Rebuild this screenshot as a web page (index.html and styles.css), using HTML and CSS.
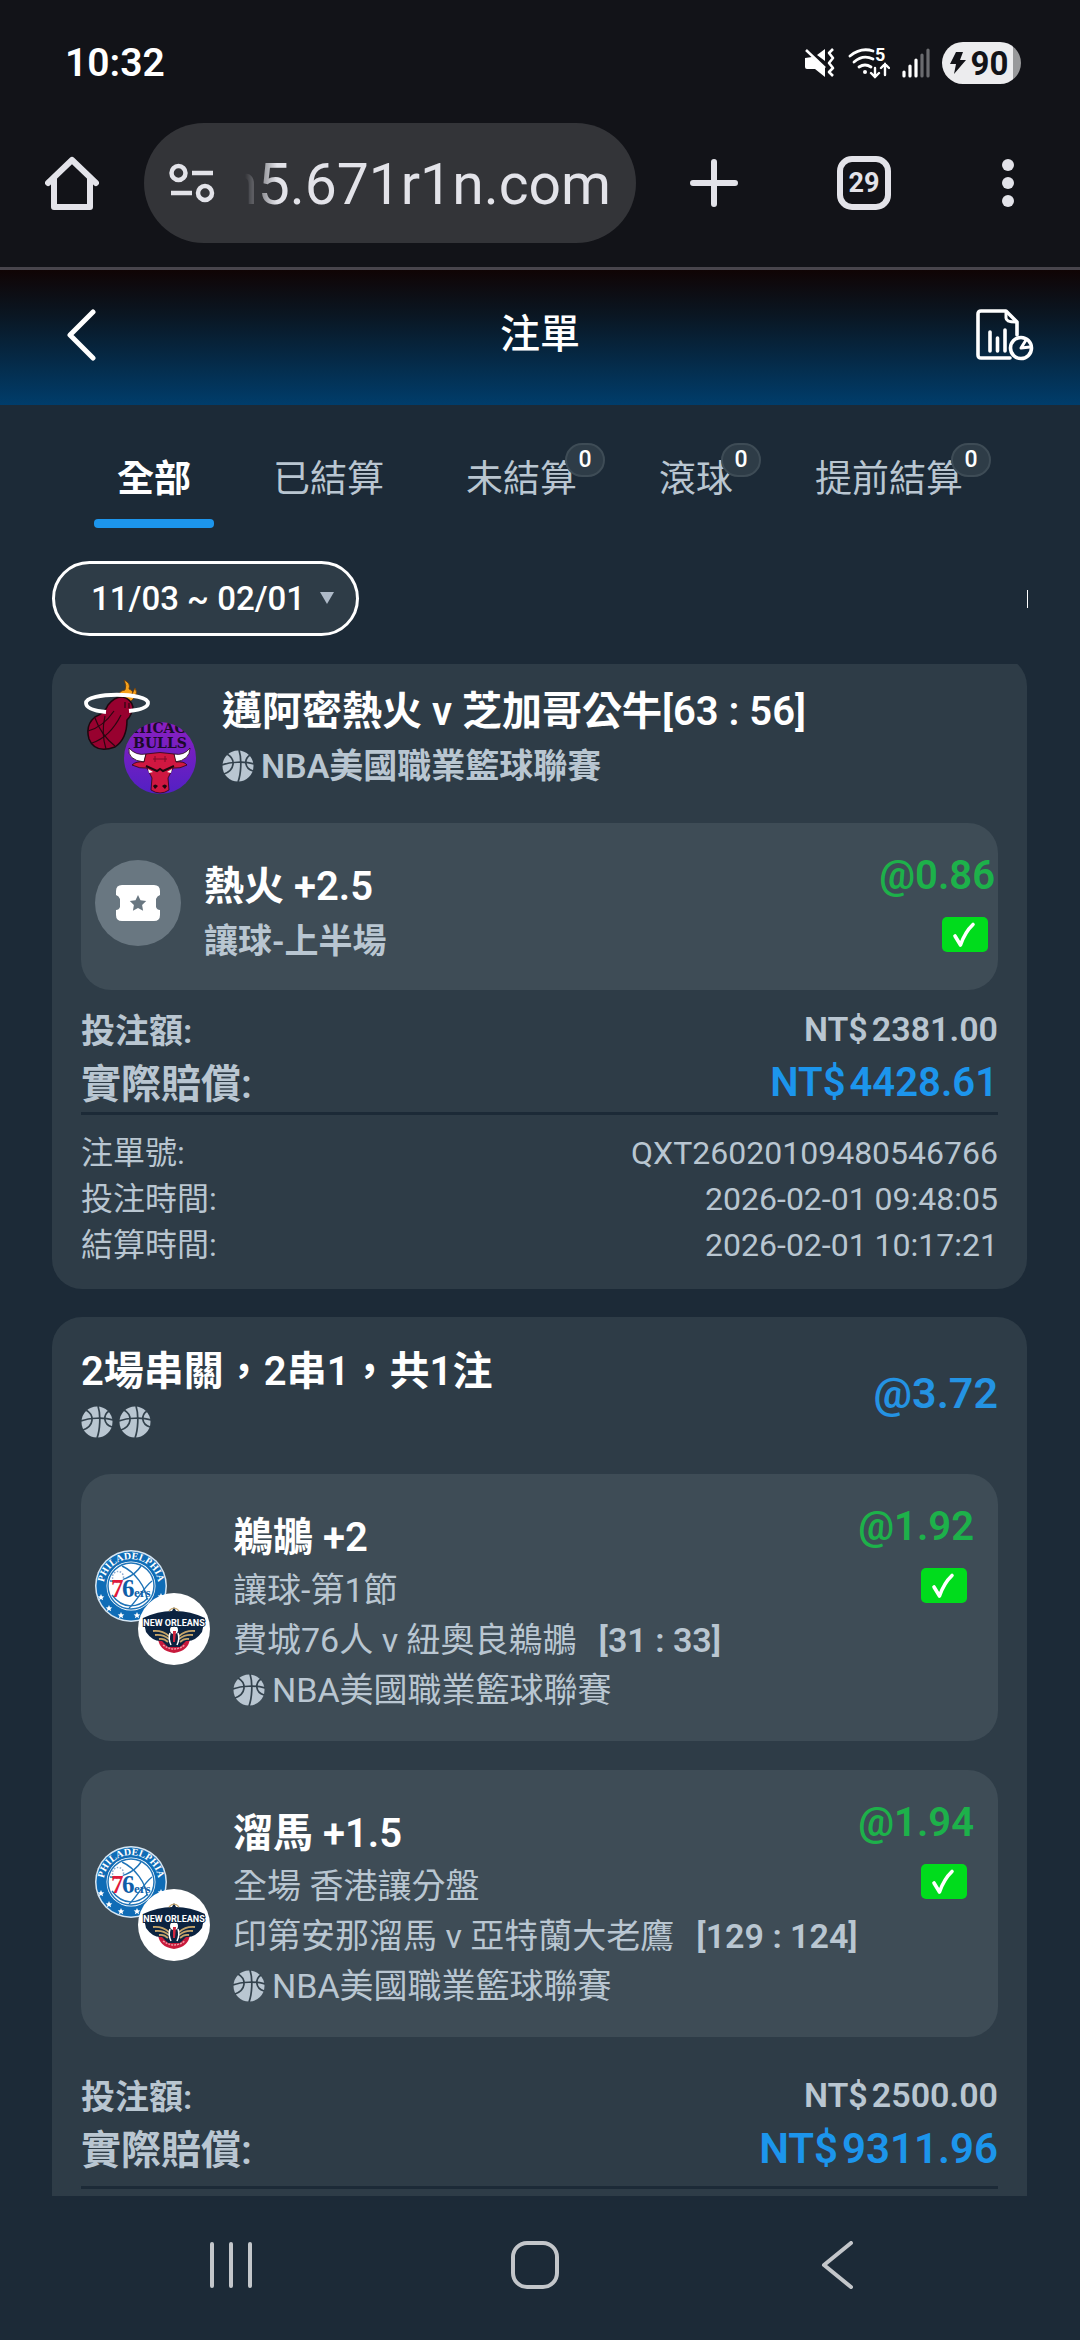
FILE: index.html
```html
<!DOCTYPE html>
<html lang="zh-Hant">
<head>
  <meta charset="UTF-8" />
  <meta name="viewport" content="width=device-width, initial-scale=1.0"/>
  <title>注單</title>
  <link rel="stylesheet" href="styles.css">
</head>
<body>

  <!-- shared icons -->
  <svg class="sprite" aria-hidden="true">
    <symbol id="ball" viewBox="0 0 32 32">
      <circle cx="16" cy="16" r="15.5" fill="#b9c6d1"/>
      <g fill="none" stroke="#33424d" stroke-width="1.7">
        <path d="M0 15C8 12 23 11 32 14"/>
        <path d="M17 0C20 9 19 24 16 32"/>
        <path d="M5 4C14 9 13 20 2 24"/>
        <path d="M28 5C22 9 22 18 31 21"/>
      </g>
    </symbol>
    <symbol id="check" viewBox="0 0 46 35">
      <rect width="46" height="35" rx="5" fill="#00dc1c"/>
      <path d="M13 19L18.500 28Q23 15 31 7.500" fill="none" stroke="#fff" stroke-width="3.600" stroke-linecap="round" stroke-linejoin="round"/>
    </symbol>
    <symbol id="sixers" viewBox="0 0 72 72">
      <path id="ring" d="M9.500 44A27.500 27.500 0 1 1 62.500 44" fill="none"/>
      <circle cx="36" cy="36" r="36" fill="#d6e6f3"/>
      <circle cx="36" cy="36" r="34.500" fill="#0f6cb6"/>
      <circle cx="36" cy="36" r="24.500" fill="#fff"/>
      <circle cx="36" cy="36" r="23" fill="none" stroke="#1f74b8" stroke-width="1.500"/>
      <g fill="none" stroke="#1f74b8" stroke-width="1.400">
        <path d="M27 16C40 22 51 37 52 50"/>
        <path d="M46 16C38 28 24 32 15 31"/>
        <path d="M17 45C28 60 43 58 53 48"/>
        <path d="M34 58C42 51 48 38 57 31"/>
      </g>
      <circle cx="23" cy="27" r="5.500" fill="#fff" stroke="#8dabd0" stroke-width="1.500" stroke-dasharray="1.500 1.500"/>
      <text class="logo-ring"><textPath href="#ring" startOffset="50%" text-anchor="middle">PHILADELPHIA</textPath></text>
      <text class="logo-seven" x="16" y="47">7</text>
      <text class="logo-six" x="27" y="47">6</text>
      <text class="logo-ers" x="39" y="47">ers</text>
      <g fill="#fff">
        <path id="star" d="M6 44l1 2.200 2.300.2-1.800 1.500.6 2.300L6 49l-2.100 1.200.6-2.300-1.800-1.500 2.300-.2z"/>
        <use href="#star" x="8" y="11"/>
        <use href="#star" x="20" y="18"/>
        <use href="#star" x="36" y="18"/>
        <use href="#star" x="60" y="-1"/>
      </g>
    </symbol>
    <symbol id="pelicans" viewBox="0 0 72 72">
      <circle cx="36" cy="36" r="36" fill="#fff"/>
      <path d="M20 45Q21 58 36 60Q51 58 52 45z" fill="#c8193b"/>
      <path d="M5 25Q20 18 34 18L36 14L38 18Q52 18 67 25L64 39Q57 49 48 48L42 54H30L24 48Q15 49 8 39z" fill="#0c2340"/>
      <g fill="none" stroke="#c5a469" stroke-width="1.800">
        <path d="M15 38Q24 37 31 43"/>
        <path d="M17 42Q25 41 31 46"/>
        <path d="M21 46Q26 45 30 49"/>
        <path d="M57 38Q48 37 41 43"/>
        <path d="M55 42Q47 41 41 46"/>
        <path d="M51 46Q46 45 42 49"/>
        <path d="M31 18Q36 12 41 18" stroke-width="1.200"/>
      </g>
      <circle cx="36" cy="37" r="4" fill="#fff"/>
      <path d="M35 38h3l-1 11h-2z" fill="#d0273f"/>
      <path d="M32 40Q30 46 33 52M40 40Q42 46 39 52" fill="none" stroke="#fff" stroke-width="1.500"/>
      <path d="M25 52Q36 60 47 52" fill="none" stroke="#ef9aa5" stroke-width="1.500" stroke-dasharray="2 1"/>
      <text class="logo-nola" x="36" y="33" text-anchor="middle">NEW ORLEANS</text>
    </symbol>
  </svg>

  <!-- phone status bar -->
  <div class="status-bar">
    <span class="clock">10:32</span>
    <div class="status-icons">
      <svg width="32" height="30" viewBox="0 0 32 30">
        <path d="M1 10L8 9L21 20V29L11 21H3Q1 21 1 19zM13 7L21 1V13z" fill="#fff"/>
        <path d="M2 2L21 20" stroke="#fff" stroke-width="2.500"/>
        <path d="M29 1l-4 4 4 5-4 5 4 5-4 4 4 4" fill="none" stroke="#fff" stroke-width="2.600" stroke-linejoin="round"/>
      </svg>
      <svg width="42" height="32" viewBox="0 0 42 32">
        <g fill="none" stroke="#fff" stroke-width="2.800" stroke-linecap="round">
          <path d="M2 9Q13 0 25 4"/>
          <path d="M6 15Q15 7 25 12"/>
          <path d="M11 20Q17 16 23 20"/>
          <path d="M27 21V30M23 26l4 4 4-4M37 28V17M33 21l4-4 4 4" stroke-width="2.400"/>
        </g>
        <circle cx="17" cy="25" r="2" fill="#fff"/>
        <text class="wifi-band" x="27" y="14">5</text>
      </svg>
      <svg width="28" height="30" viewBox="0 0 28 30">
        <path d="M2 24V28M8 18V28M14 12V28" stroke="#fff" stroke-width="3.200" stroke-linecap="round"/>
        <path d="M20 7V28M26 2V28" stroke="#6a6b6f" stroke-width="3.200" stroke-linecap="round"/>
      </svg>
      <div class="battery">
        <svg width="16" height="24" viewBox="0 0 16 24"><path d="M6 1H13L10 9H16L4 23L6 13H0z" fill="#121318"/></svg>
        <span>90</span>
      </div>
    </div>
  </div>

  <!-- browser toolbar -->
  <div class="toolbar">
    <button class="icon-btn" aria-label="Home">
      <svg width="54" height="54" viewBox="0 0 54 54" fill="none" stroke="#e3e3e9" stroke-width="6" stroke-linecap="round" stroke-linejoin="round">
        <path d="M3 27L27 4L51 27M9 23V51H45V23"/>
      </svg>
    </button>
    <div class="address">
      <svg width="46" height="40" viewBox="0 0 46 40" fill="none" stroke="#e3e3e9" stroke-width="4.500">
        <circle cx="9.500" cy="10" r="7"/>
        <path d="M23 10H44M2 30H23"/>
        <circle cx="36" cy="30" r="7"/>
      </svg>
      <input type="text" class="url" aria-label="網址" value="n5.671r1n.com">
    </div>
    <button class="icon-btn" aria-label="New tab">
      <svg width="48" height="48" viewBox="0 0 48 48" stroke="#e3e3e9" stroke-width="6" stroke-linecap="round"><path d="M24 3V45M3 24H45"/></svg>
    </button>
    <button class="tab-count">29</button>
    <button class="icon-btn" aria-label="Menu">
      <svg width="12" height="48" viewBox="0 0 12 48" fill="#e3e3e9"><circle cx="6" cy="6" r="6"/><circle cx="6" cy="24" r="6"/><circle cx="6" cy="42" r="6"/></svg>
    </button>
  </div>

  <header class="page-header">
    <button class="icon-btn" aria-label="返回">
      <svg width="30" height="52" viewBox="0 0 30 52" fill="none" stroke="#fff" stroke-width="5" stroke-linecap="round" stroke-linejoin="round"><path d="M27 3L4 26L27 49"/></svg>
    </button>
    <h1>注單</h1>
    <button class="icon-btn report" aria-label="報表">
      <svg width="58" height="52" viewBox="0 0 58 52" fill="none" stroke="#fff" stroke-width="3.600" stroke-linecap="round" stroke-linejoin="round">
        <path d="M34 49H5Q2 49 2 46V5Q2 2 5 2H30L41 13V26"/>
        <path d="M30 3V9Q30 13 40 13" stroke-width="3"/>
        <path d="M14 23V42M21.500 29V42M29 21V42"/>
        <circle cx="45" cy="39" r="10.500"/>
        <path d="M45 39L50 31M45 39L54 38" stroke-width="3"/>
      </svg>
    </button>
  </header>

  <nav class="tabs">
    <button class="tab active">全部</button>
    <button class="tab">已結算</button>
    <button class="tab">未結算<span class="badge">0</span></button>
    <button class="tab">滾球<span class="badge">0</span></button>
    <button class="tab">提前結算<span class="badge">0</span></button>
  </nav>

  <div class="filters">
    <div class="date-range">
      <select aria-label="日期">
        <option>11/03 ~ 02/01</option>
      </select>
      <svg class="arrow" width="14" height="12" viewBox="0 0 14 12"><path d="M0 0H14L7 12z" fill="#aebac8"/></svg>
    </div>
    <span class="more"></span>
  </div>

  <main class="list">

    <section class="card">
      <div class="card-head">
        <div class="logos">
          <svg viewBox="0 0 72 72">
            <path d="M38 18Q37 12 44 11Q46 7 43 1Q50 4 48 10Q53 12 51 15L54 9Q57 13 54 18L48 24z" fill="#f7a11a" stroke="#6b3a0a" stroke-width=".8"/>
            <path d="M27 26Q34 17 42 18Q50 20 52 28Q51 36 46 41Q46 60 34 68Q14 75 8 60Q4 46 14 38Q24 34 27 26z" fill="#98012f" stroke="#1c070e" stroke-width="1.500"/>
            <g fill="none" stroke="#2a0711" stroke-width="1.200">
              <path d="M7 52Q22 48 33 32"/>
              <path d="M11 64Q29 58 40 36"/>
              <path d="M14 39Q20 56 34 67"/>
              <path d="M24 37Q20 54 25 70"/>
              <path d="M44 23V29M48 24V29"/>
            </g>
            <path d="M48 32Q67 30 67 24C67 13 5 13 5 24Q5 31 25 33" fill="none" stroke="#fff" stroke-width="3.800"/>
          </svg>
          <svg viewBox="0 0 72 72">
            <defs>
              <linearGradient id="purple" x1="0" y1="0" x2="0" y2="1">
                <stop offset="0" stop-color="#8b1fc0"/>
                <stop offset="1" stop-color="#5220c4"/>
              </linearGradient>
              <clipPath id="round"><circle cx="36" cy="36" r="36"/></clipPath>
            </defs>
            <circle cx="36" cy="36" r="36" fill="url(#purple)"/>
            <g clip-path="url(#round)">
              <text class="logo-bulls" x="36" y="11" text-anchor="middle">CHICAGO</text>
              <text class="logo-bulls" x="36" y="26" text-anchor="middle">BULLS</text>
            </g>
            <path d="M22 32Q12 34 5 26Q3 38 20 40zM50 32Q60 34 66 26Q66 38 51 40z" fill="#fff" stroke="#2a0711" stroke-width=".8"/>
            <path d="M22 32Q36 29 50 32L52 40Q60 39 63 43Q56 47 49 46L44 56L45 68Q36 74 27 68L28 56L23 46Q16 47 8 43Q12 39 20 40z" fill="#cf1741" stroke="#2a0711" stroke-width=".8"/>
            <path d="M22 44L33 49L36 47L39 49L50 44" fill="none" stroke="#1c070e" stroke-width="2"/>
            <path d="M29 37H43M31 34V40M41 34V40" fill="none" stroke="#7d0d28"/>
            <path d="M24 47l5 3-4 1zM48 47l-5 3 4 1z" fill="#fff"/>
            <path d="M29 64Q31 61 34 64L31 67zM43 64Q41 61 38 64L41 67z" fill="#1c070e"/>
          </svg>
        </div>
        <div class="match">
          <h2>邁阿密熱火 v 芝加哥公牛[63 : 56]</h2>
          <p class="league"><svg class="ball"><use href="#ball"/></svg>NBA美國職業籃球聯賽</p>
        </div>
      </div>

      <div class="bet single">
        <div class="ticket">
          <svg width="44" height="36" viewBox="0 0 44 36">
            <path d="M6 0H38Q44 0 44 6V10Q41 11 40 14V22Q41 25 44 25V30Q44 36 38 36H6Q0 36 0 30V25Q3 25 4 22V14Q3 11 0 10V6Q0 0 6 0z" fill="#fff"/>
            <path d="M22 10l2.500 5.200 5.700.8-4.100 4 1 5.700-5.100-2.700-5.100 2.700 1-5.700-4.100-4 5.700-.8z" fill="#697781"/>
          </svg>
        </div>
        <div class="info">
          <h3>熱火 +2.5</h3>
          <p class="market">讓球-上半場</p>
        </div>
        <div class="result">
          <span class="odds">@0.86</span>
          <svg class="check"><use href="#check"/></svg>
        </div>
      </div>

      <dl class="money">
        <div><dt>投注額:</dt><dd><span>NT$</span>2381.00</dd></div>
        <div class="payout"><dt>實際賠償:</dt><dd><span>NT$</span>4428.61</dd></div>
      </dl>
      <dl class="meta">
        <div><dt>注單號:</dt><dd>QXT26020109480546766</dd></div>
        <div><dt>投注時間:</dt><dd>2026-02-01 09:48:05</dd></div>
        <div><dt>結算時間:</dt><dd>2026-02-01 10:17:21</dd></div>
      </dl>
    </section>

    <section class="card parlay">
      <div class="card-head">
        <div class="match">
          <h2>2場串關，2串1，共1注</h2>
          <div class="balls">
            <svg class="ball"><use href="#ball"/></svg>
            <svg class="ball"><use href="#ball"/></svg>
          </div>
        </div>
        <span class="total-odds">@3.72</span>
      </div>

      <div class="bet">
        <div class="logos">
          <svg><use href="#sixers"/></svg>
          <svg><use href="#pelicans"/></svg>
        </div>
        <div class="info">
          <h3>鵜鶘 +2</h3>
          <p>讓球-第1節</p>
          <p>費城76人 v 紐奧良鵜鶘<b>[31 : 33]</b></p>
          <p class="league"><svg class="ball"><use href="#ball"/></svg>NBA美國職業籃球聯賽</p>
        </div>
        <div class="result">
          <span class="odds">@1.92</span>
          <svg class="check"><use href="#check"/></svg>
        </div>
      </div>

      <div class="bet">
        <div class="logos">
          <svg><use href="#sixers"/></svg>
          <svg><use href="#pelicans"/></svg>
        </div>
        <div class="info">
          <h3>溜馬 +1.5</h3>
          <p>全場 香港讓分盤</p>
          <p>印第安那溜馬 v 亞特蘭大老鷹<b>[129 : 124]</b></p>
          <p class="league"><svg class="ball"><use href="#ball"/></svg>NBA美國職業籃球聯賽</p>
        </div>
        <div class="result">
          <span class="odds">@1.94</span>
          <svg class="check"><use href="#check"/></svg>
        </div>
      </div>

      <dl class="money">
        <div><dt>投注額:</dt><dd><span>NT$</span>2500.00</dd></div>
        <div class="payout"><dt>實際賠償:</dt><dd><span>NT$</span>9311.96</dd></div>
      </dl>
    </section>

  </main>

  <!-- system navigation -->
  <footer class="system-nav">
    <button class="icon-btn" aria-label="Recents">
      <svg width="48" height="48" viewBox="0 0 48 48" stroke="#c3c6ca" stroke-width="4" stroke-linecap="round"><path d="M4 3V45M23 3V45M42 3V45"/></svg>
    </button>
    <button class="icon-btn" aria-label="Home">
      <svg width="48" height="48" viewBox="0 0 48 48" fill="none" stroke="#c3c6ca" stroke-width="4"><rect x="2" y="2" width="44" height="44" rx="14"/></svg>
    </button>
    <button class="icon-btn" aria-label="Back">
      <svg width="48" height="48" viewBox="0 0 48 48" fill="none" stroke="#c3c6ca" stroke-width="4" stroke-linecap="round" stroke-linejoin="round"><path d="M37 2L10 24L37 46"/></svg>
    </button>
  </footer>

</body>
</html>
```
FILE: styles.css
```css
* {
  box-sizing: border-box;
}

body {
  margin: 0;
  height: 100vh;
  display: flex;
  flex-direction: column;
  background-color: #1c2a37;
  color: #b9c6d1;
  font-family: Roboto, "Noto Sans CJK TC", sans-serif;
  font-size: 34px;
}

h1, h2, h3, p, dl, dd {
  margin: 0;
}

svg {
  display: block;
  flex-shrink: 0;
}

button {
  padding: 0;
  border: none;
  background: none;
  color: inherit;
  font-family: inherit;
  cursor: pointer;
}

.sprite {
  display: none;
}

/* status bar */
.status-bar {
  height: 123px;
  padding: 3px 59px 0 65px;
  display: flex;
  align-items: center;
  justify-content: space-between;
  background-color: #121318;
  color: #fff;
}

.clock {
  font-size: 39px;
  font-weight: 600;
}

.status-icons {
  display: flex;
  align-items: center;
  gap: 12px;
}

.wifi-band {
  fill: #fff;
  font-size: 18px;
  font-weight: 700;
}

.battery {
  width: 79px;
  height: 42px;
  border-radius: 21px;
  display: flex;
  align-items: center;
  justify-content: center;
  gap: 5px;
  padding-right: 5px;
  background: linear-gradient(to right, #ececee 90%, #98999b 90%);
  color: #121318;
  font-size: 33px;
  font-weight: 700;
}

/* browser toolbar */
.toolbar {
  display: flex;
  align-items: center;
  padding: 0 66px 24px 45px;
  border-bottom: 3px solid #48454c;
  background-color: #121318;
}

.address {
  flex: 1;
  min-width: 0;
  height: 120px;
  margin: 0 54px 0 45px;
  padding: 0 25px;
  display: flex;
  align-items: center;
  gap: 22px;
  border-radius: 60px;
  background-color: #333438;
}

.url {
  flex: 1;
  min-width: 0;
  padding: 4px 0 0;
  border: none;
  outline: none;
  background: none;
  color: #e3e3e9;
  font-family: Roboto, sans-serif;
  font-size: 57px;
  line-height: 80px;
  direction: rtl;
  -webkit-mask-image: linear-gradient(to right, transparent 8px, #000 40px);
  mask-image: linear-gradient(to right, transparent 8px, #000 40px);
}

.tab-count {
  width: 54px;
  height: 54px;
  margin: 0 111px 0 99px;
  border: 6px solid #e3e3e9;
  border-radius: 15px;
  color: #e3e3e9;
  font-size: 27px;
  font-weight: 700;
}

/* page header */
.page-header {
  display: grid;
  grid-template-columns: 1fr auto 1fr;
  align-items: center;
  height: 135px;
  padding: 0 46px 6px 66px;
  background: linear-gradient(#100404, #0a1622 33%, #003d6b);
  color: #fff;
}

.page-header h1 {
  margin-right: 20px;
  font-size: 40px;
  font-weight: 500;
  line-height: 54px;
}

.report {
  justify-self: end;
}

/* tabs */
.tabs {
  display: flex;
  gap: 36px;
  padding: 48px 0 0 94px;
}

.tab {
  position: relative;
  padding: 0 23px 21px;
  font-size: 37px;
  line-height: 54px;
  white-space: nowrap;
}

.tab.active {
  color: #fff;
  font-weight: 700;
}

.tab.active::after {
  content: "";
  position: absolute;
  left: 0;
  bottom: 0;
  width: 100%;
  height: 9px;
  border-radius: 4px;
  background-color: #1c95ec;
}

.badge {
  position: absolute;
  top: -10px;
  right: -5px;
  width: 40px;
  height: 34px;
  border: 2px solid #3e4c56;
  border-radius: 17px;
  background-color: #2e3c47;
  color: #fff;
  font-size: 23px;
  font-weight: 500;
  line-height: 30px;
}

/* filters */
.filters {
  display: flex;
  align-items: center;
  justify-content: space-between;
  padding: 33px 52px 28px;
}

.date-range {
  position: relative;
}

.date-range select {
  appearance: none;
  display: block;
  width: 307px;
  height: 75px;
  padding: 0 0 0 36px;
  border: 3px solid #fff;
  border-radius: 38px;
  background-color: #2e3c47;
  color: #fff;
  font-family: inherit;
  font-size: 33px;
  font-weight: 500;
}

.arrow {
  position: absolute;
  top: 31px;
  right: 25px;
}

.more {
  width: 1px;
  height: 18px;
  background-color: #fff;
}

/* bet list */
.list {
  flex: 1;
  min-height: 0;
  overflow: hidden;
  padding: 0 53px 0 52px;
}

.card {
  margin-bottom: 28px;
  padding: 23px 29px 21px;
  border-radius: 30px;
  background-color: #2e3c47;
}

/* first card is already scrolled a little under the filters */
.card:first-child {
  margin-top: -8px;
}

.card.parlay {
  padding-bottom: 60px;
}

.card-head {
  display: flex;
  align-items: center;
  gap: 26px;
  margin-bottom: 29px;
}

.match {
  flex: 1;
  padding-top: 4px;
}

.match h2 {
  color: #fff;
  font-size: 40px;
  font-weight: 600;
  line-height: 55px;
}

.match .league {
  font-weight: 600;
  line-height: 55px;
}

.league {
  display: flex;
  align-items: center;
  gap: 7px;
}

.ball {
  width: 32px;
  height: 32px;
}

.logos {
  position: relative;
  flex-shrink: 0;
  width: 115px;
  height: 115px;
}

.logos svg {
  width: 72px;
  height: 72px;
}

.logos svg + svg {
  position: absolute;
  right: 0;
  bottom: 0;
}

.logo-ring {
  fill: #fff;
  font-family: "Liberation Serif", serif;
  font-size: 10px;
  font-weight: 700;
}

.logo-seven, .logo-six, .logo-ers {
  fill: #0f5ea8;
  font-family: "Liberation Serif", serif;
  font-size: 25px;
  font-weight: 700;
}

.logo-seven {
  fill: #e01a3c;
}

.logo-ers {
  font-size: 13px;
}

.logo-nola {
  fill: #fff;
  stroke: #0c2340;
  stroke-width: 2px;
  paint-order: stroke;
  font-family: Roboto, sans-serif;
  font-size: 9px;
  font-weight: 700;
}

.logo-bulls {
  fill: #1c0a2a;
  font-family: "DejaVu Serif", serif;
  font-size: 14px;
  font-weight: 700;
}

.bet {
  display: flex;
  align-items: flex-start;
  gap: 23px;
  margin-bottom: 29px;
  padding: 29px 24px 26px 14px;
  border-radius: 30px;
  background-color: #3e4c56;
}

.bet .logos {
  margin-top: 47px;
}

.bet.single {
  margin-bottom: 14px;
  padding-right: 3px;
  padding-bottom: 22px;
}

.ticket {
  display: flex;
  align-items: center;
  justify-content: center;
  width: 86px;
  height: 86px;
  margin-top: 8px;
  border-radius: 50%;
  background-color: #697781;
}

.info {
  flex: 1;
  min-width: 0;
  margin-top: 8px;
  line-height: 50px;
  white-space: nowrap;
}

.info h3 {
  color: #fff;
  font-size: 40px;
  font-weight: 600;
  line-height: 54px;
}

.info b {
  margin-left: 22px;
  font-weight: 600;
}

.info .market {
  font-weight: 600;
  line-height: 54px;
}

.result {
  display: flex;
  flex-direction: column;
  align-items: flex-end;
  gap: 17px;
}

.odds {
  color: #1db14a;
  font-size: 40px;
  font-weight: 600;
  line-height: 48px;
}

.check {
  width: 46px;
  height: 35px;
  margin-right: 7px;
}

.parlay .match {
  padding: 5px 0 7px;
}

.parlay .match h2 {
  line-height: 54px;
}

.balls {
  display: flex;
  gap: 6px;
  margin-top: 7px;
}

.total-odds {
  color: #2493e3;
  font-size: 43px;
  font-weight: 600;
}

/* amounts */
.money {
  border-bottom: 3px solid #1c2a37;
  font-weight: 600;
}

.parlay .money {
  margin-top: 33px;
  padding-bottom: 8px;
}

.money div, .meta div {
  display: flex;
  justify-content: space-between;
}

.money dt {
  line-height: 54px;
}

.money dd {
  line-height: 50px;
}

.money dd span {
  margin-right: 4px;
}

.payout {
  font-size: 40px;
}

.payout dd {
  color: #1c95ec;
}

.parlay .payout dd {
  font-size: 42px;
}

.meta {
  margin-top: 15px;
  font-size: 32px;
  line-height: 46px;
}

/* system navigation */
.system-nav {
  display: flex;
  align-items: center;
  justify-content: space-between;
  height: 144px;
  padding: 0 218px 6px 208px;
}
```
